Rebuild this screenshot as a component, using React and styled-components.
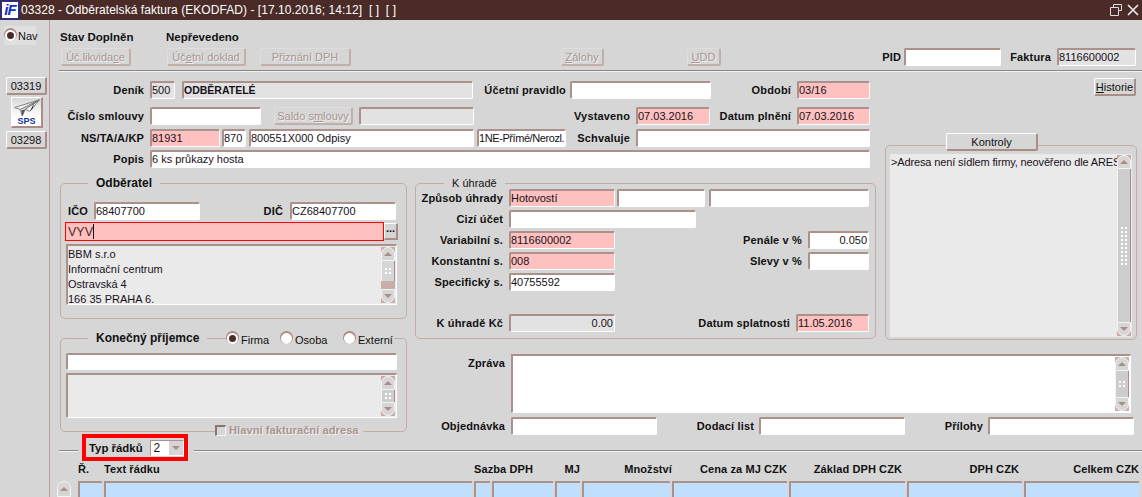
import React from 'react'
import styled, { createGlobalStyle } from 'styled-components'

const GlobalStyle = createGlobalStyle`
html, body { margin: 0; padding: 0; background: #d6d6d6; }
body { font-family: "Liberation Sans", Arial, sans-serif; font-size: 11px; color: #111; }
* { box-sizing: border-box; }
`
const Page = styled.div`
width: 1142px;
height: 497px;
overflow: hidden;
display: flex;
flex-direction: column;
background: #d6d6d6;
`
const TitleBar = styled.div`
height: 20px;
flex: none;
display: flex;
align-items: center;
background: #4a2b28;
color: #fff;
font-size: 12px;
letter-spacing: 0.05px;
padding: 0 3px 0 1px;
`
const TitleText = styled.span`
margin-left: 2px;
flex: 1;
white-space: pre;
`
const Logo = styled.span`
width: 18px;
height: 18px;
background: #fff;
border: 1px solid #1530c8;
color: #1530c8;
font: italic bold 15px/16px "Liberation Sans", sans-serif;
text-align: center;
letter-spacing: -1px;
`
const WinIcon = styled.svg`
width: 12px;
height: 12px;
margin-left: ${p => p.$ml || 0}px;
`
const Body = styled.div`
flex: 1;
display: flex;
min-height: 0;
`
const Sidebar = styled.div`
width: 50px;
flex: none;
display: flex;
flex-direction: column;
align-items: flex-start;
padding: 6px 0 0 4px;
border-right: 1px solid #b9a19b;
`
const NavItem = styled.div`
width: 32px;
height: 19px;
display: flex;
align-items: center;
gap: 2px;
padding-left: 1px;
background: #e0e0e0;
font-size: 11px;
`
const Main = styled.div`
flex: 1;
min-width: 0;
display: flex;
flex-direction: column;
`
const Header = styled.div`
height: 50px;
flex: none;
padding: 9px 0 0 10px;
`
const StatusRow = styled.div`
display: flex;
height: 15px;
align-items: center;
font-weight: bold;
font-size: 11.5px;
`
const StatusText = styled.span`
width: 106px;
white-space: pre;
`
const ButtonRow = styled.div`
display: flex;
align-items: center;
height: 18px;
margin: 4px 0 0 1px;
`
const Rule = styled.div`
height: 2px;
flex: none;
margin-left: 9px;
border-top: 1px solid #8b8686;
border-bottom: 1px solid #f2f2f2;
`
const Btn = styled.button`
width: ${p => p.$w}px;
height: ${p => p.$h || 18}px;
margin-left: ${p => p.$ml || 0}px;
flex: none;
padding: 0;
font: 11px "Liberation Sans", sans-serif;
white-space: nowrap;
background: #d6d6d6;
color: ${p => (p.$off ? '#a8958f' : '#111')};
text-shadow: ${p => (p.$off ? '1px 1px 0 #efefef' : 'none')};
border-style: solid;
border-width: 1px 2px 2px 1px;
border-color: ${p => (p.$off ? '#e4dcda #c4aea8 #c4aea8 #e4dcda' : '#fff #a98d86 #a98d86 #fff')};
border-radius: 2px;
`
const Field = styled.div`
width: ${p => p.$w}px;
height: ${p => p.$h || 18}px;
margin-left: ${p => p.$ml || 0}px;
flex: none;
display: flex;
align-items: center;
justify-content: ${p => (p.$right ? 'flex-end' : 'flex-start')};
padding: 0 1px 1px 0;
font-size: ${p => (p.$bold ? 10.5 : 11)}px;
letter-spacing: ${p => (p.$tight ? -0.42 : 0)}px;
white-space: nowrap;
overflow: hidden;
color: #181018;
background: ${p => ({ pink: '#ffc0c0', grey: '#e2e2e2', white: '#fff' }[p.$tone || 'white'])};
font-weight: ${p => (p.$bold ? 'bold' : 'normal')};
border-style: solid;
border-width: 2px 1px 1px 2px;
border-color: #ab918b #fff #fff #ab918b;
border-radius: 2px;
`
const Label = styled.div`
width: ${p => p.$w}px;
flex: none;
padding-top: ${p => p.$pt || 0}px;
margin-left: ${p => p.$ml || 0}px;
text-align: right;
font-weight: bold;
font-size: 11px;
letter-spacing: 0.15px;
white-space: nowrap;
`
const FormGrid = styled.div`
display: grid;
grid-template-columns: 358px 477px 257px;
grid-template-rows: 104px 170px 89px;
grid-template-areas:
  "top top side"
  "buyer pay side"
  "buyer msg msg";
flex: none;
`
const TopArea = styled.div`
grid-area: top;
`
const Row = styled.div`
display: flex;
align-items: ${p => (p.$top ? 'flex-start' : 'center')};
margin-top: ${p => p.$mt || 0}px;
`
const SideArea = styled.div`
grid-area: side;
display: flex;
flex-direction: column;
align-items: flex-start;
`
const BuyerArea = styled.div`
grid-area: buyer;
padding: 7px 0 0 10px;
`
const PayArea = styled.div`
grid-area: pay;
padding: 7px 0 0 7px;
`
const MsgArea = styled.div`
grid-area: msg;
padding-top: 8px;
`
const HistorieBtn = styled(Btn)`
margin-top: 6px;
`
const SideBtn = styled(Btn)`
margin-top: ${p => p.$mt || 0}px;
`
const Group = styled.div`
position: relative;
width: ${p => p.$w}px;
height: ${p => p.$h}px;
margin: ${p => p.$m || 0};
padding: ${p => p.$pad || 0};
border: 1px solid #c4aca6;
border-radius: 5px;
`
const Legend = styled.div`
position: absolute;
top: -8px;
left: ${p => p.$x}px;
padding: 0 8px;
background: #d6d6d6;
font-weight: ${p => (p.$thin ? 'normal' : 'bold')};
font-size: ${p => (p.$thin ? 11 : 12)}px;
line-height: 15px;
`
const KontrolyBtn = styled(Btn)`
position: absolute;
top: -13px;
left: 60px;
`
const TextBox = styled.div`
width: ${p => p.$w}px;
height: ${p => p.$h}px;
margin: ${p => p.$m || 0};
flex: none;
display: flex;
justify-content: space-between;
padding: 1px 1px 1px 0;
background: ${p => p.$bg || '#eaeaea'};
border-style: solid;
border-width: ${p => (p.$flat ? '0' : '2px 1px 1px 2px')};
border-color: #ab918b #fff #fff #ab918b;
font-size: 11px;
line-height: 15px;
`
const Lines = styled.div`
white-space: pre;
flex: 1;
min-width: 0;
overflow: ${p => (p.$clip ? 'hidden' : 'visible')};
padding-left: ${p => (p.$clip ? 1 : 0)}px;
letter-spacing: ${p => (p.$clip ? -0.14 : 0)}px;
color: #181018;
`
const ScrollTrack = styled.div`
width: 14px;
flex: none;
display: flex;
flex-direction: column;
background: #c8aea8;
`
const ScrollEnd = styled.div`
height: 14px;
flex: none;
display: flex;
align-items: center;
justify-content: center;
background: #d6d6d6;
border: 1px solid #f4f4f4;
border-radius: ${p => (p.$down ? '0 0 7px 7px' : '7px 7px 0 0')};
&::after {
  content: '';
  border-left: 4px solid transparent;
  border-right: 4px solid transparent;
  border-${p => (p.$down ? 'top' : 'bottom')}: 4px solid #a98d86;
}
`
const ScrollThumb = styled.div`
flex: ${p => (p.$fill ? 1 : 'none')};
height: ${p => (p.$fill ? 'auto' : '20px')};
display: flex;
align-items: center;
justify-content: center;
background: ${p => (p.$fill ? '#cdcdcd' : '#d6d6d6')};
border-left: 1px solid #f4f4f4;
border-right: 1px solid #a98d86;
`
const ScrollRest = styled.div`
flex: 1;
`
const Grip = styled.div`
width: 8px;
height: ${p => p.$h}px;
background-image: radial-gradient(circle, #fff 0.8px, transparent 1px);
background-size: 4px 4px;
`
const ErrorField = styled.div`
width: 319px;
height: 19px;
flex: none;
display: flex;
align-items: center;
padding-left: 2px;
background: #ffc0c0;
border: 1px solid #f00;
font-size: 12.5px;
color: #4a2b28;
`
const Caret = styled.span`
width: 1px;
height: 15px;
background: #111;
`
const DotsBtn = styled.div`
width: 14px;
height: 17px;
flex: none;
text-align: center;
font-weight: bold;
font-size: 11px;
line-height: 9px;
background: #d6d6d6;
border-style: solid;
border-width: 1px 2px 2px 1px;
border-color: #fff #a98d86 #a98d86 #fff;
`
const RadioDot = styled.span`
width: 11px;
height: 11px;
flex: none;
border-radius: 50%;
background: ${p => (p.$on ? '#4a2b28' : '#fff')};
border: ${p => (p.$on ? '2px solid #fff' : '1px solid #fff')};
box-shadow: 0 -1px 0 1px #a98d86;
`
const RadioGroup = styled.div`
position: absolute;
top: -7px;
left: 165px;
display: flex;
padding-left: 1px;
background: #d6d6d6;
`
const RadioItem = styled.label`
display: flex;
align-items: flex-start;
gap: 3px;
width: ${p => p.$w}px;
font-size: 11px;
line-height: 16px;
span { margin-top: 1px; }
`
const AddressCheck = styled.div`
position: absolute;
left: 154px;
top: 85px;
display: flex;
align-items: center;
gap: 3px;
background: #d6d6d6;
padding-right: 4px;
color: #a8958f;
font-weight: bold;
font-size: 11px;
letter-spacing: 0.1px;
text-shadow: 1px 1px 0 #efefef;
`
const CheckBox = styled.span`
width: 11px;
height: 11px;
border-style: solid;
border-width: 2px 1px 1px 2px;
border-color: #8c7570 #f4f4f4 #f4f4f4 #8c7570;
`
const Divider = styled.div`
height: 27px;
flex: none;
margin-top: -1px;
display: flex;
align-items: flex-start;
padding-left: 9px;
`
const DividerLine = styled(Rule)`
margin: 16px 0 0 ${p => p.$ml || 0}px;
width: ${p => (p.$w ? `${p.$w}px` : 'auto')};
flex: ${p => (p.$w ? 'none' : 1)};
`
const TypeBox = styled.div`
width: 106px;
height: 27px;
margin-left: 4px;
flex: none;
display: flex;
align-items: center;
padding-left: 3px;
border: 4px solid #f00;
font-weight: bold;
font-size: 11.4px;
white-space: nowrap;
`
const SelectBox = styled.div`
width: 34px;
height: 16px;
margin-left: 7px;
display: flex;
background: #fff;
font-weight: normal;
font-size: 12px;
line-height: 15px;
padding-left: 3px;
justify-content: space-between;
border-style: solid;
border-width: 1px;
border-color: #ab918b #fff #fff #ab918b;
`
const SelectArrow = styled.span`
width: 14px;
background: #d6d6d6;
display: flex;
align-items: center;
justify-content: center;
&::after {
  content: '';
  border-left: 4px solid transparent;
  border-right: 4px solid transparent;
  border-top: 4px solid #a98d86;
}
`
const LineGrid = styled.div`
display: grid;
grid-template-columns: 19px 24px 368px 16px 61px 25px 88px 115px 116px 115px 115px;
column-gap: 2px;
padding-left: 7px;
margin-top: ${p => p.$mt || 0}px;
`
const ColHead = styled.div`
grid-column: ${p => p.$span || 'auto'};
text-align: ${p => (p.$right ? 'right' : 'left')};
margin-right: ${p => p.$mr || 0}px;
font-weight: bold;
font-size: 11px;
letter-spacing: 0.1px;
line-height: 14px;
white-space: nowrap;
`
const LineCell = styled.div`
height: 20px;
background: #bfdffc;
border-style: solid;
border-width: 2px 0 0 2px;
border-color: #ab918b;
`
const UpBtn = styled(ScrollEnd)`
width: 14px;
height: 16px;
`
const IconBtn = styled.button`
width: 32px;
height: 31px;
margin: 2px 0 3px 7px;
padding: 0;
display: flex;
flex-direction: column;
align-items: center;
background: linear-gradient(#d8d8d8, #fff 70%);
border-style: solid;
border-width: 1px 2px 2px 1px;
border-color: #fff #a98d86 #a98d86 #fff;
color: #1530a8;
font: bold 9px/9px "Liberation Sans", sans-serif;
`

function Scrollbar({ rest, grip }) {
  return (
    <ScrollTrack>
      <ScrollEnd />
      <ScrollThumb $fill={!rest}>
        <Grip $h={grip} />
      </ScrollThumb>
      {rest ? <ScrollRest /> : null}
      <ScrollEnd $down />
    </ScrollTrack>
  )
}

function Radio({ on, w, children }) {
  return (
    <RadioItem $w={w}>
      <RadioDot $on={on} />
      {children}
    </RadioItem>
  )
}

export default function App() {
  return (
    <Page>
      <GlobalStyle />
      <TitleBar>
        <Logo>iF</Logo>
        <TitleText>03328 - Odběratelská faktura (EKODFAD) - [17.10.2016; 14:12]  [ ]  [ ]</TitleText>
        <WinIcon viewBox="0 0 12 12" fill="none" stroke="#ddd">
          <path d="M3.5 3V.5h8v6H9M.5 3.5h8v8h-8z" />
        </WinIcon>
        <WinIcon viewBox="0 0 12 12" $ml={5} fill="none" stroke="#eee" strokeWidth="1.6">
          <path d="M1 1l10 10M11 1L1 11" />
        </WinIcon>
      </TitleBar>
      <Body>
        <Sidebar>
          <NavItem>
            <RadioDot $on />
            Nav
          </NavItem>
          <SideBtn $w={41} $ml={2} $mt={32}>03319</SideBtn>
          <IconBtn>
            <svg width="28" height="20" viewBox="0 0 28 20">
              <path d="M1 10L27 2 17 14 12 12 9 19 7 12z" fill="#fbfbfb" stroke="#777" strokeWidth="1" />
              <path d="M7 12L27 2 12 12" fill="#ddd" stroke="#666" strokeWidth="1" />
              <path d="M8 13l1 6 3-7z" fill="#555" />
              <path d="M22 4l-5 10 3-3z" fill="#333" />
            </svg>
            SPS
          </IconBtn>
          <Btn $w={41} $ml={2}>03298</Btn>
        </Sidebar>
        <Main>
          <Header>
            <StatusRow>
              <StatusText>Stav Doplněn</StatusText>
              <span>Nepřevedeno</span>
            </StatusRow>
            <ButtonRow>
              <Btn $w={70} $off>Úč.likvida<u>c</u>e</Btn>
              <Btn $w={79} $ml={36} $off>Úč<u>e</u>tní doklad</Btn>
              <Btn $w={91} $ml={14} $off>Přiznání DPH</Btn>
              <Btn $w={43} $ml={210} $off><u>Z</u>álohy</Btn>
              <Btn $w={34} $ml={83} $off><u>U</u>DD</Btn>
              <Label $w={20} $ml={160}>PID</Label>
              <Field $w={97} $ml={3} />
              <Label $w={50}>Faktura</Label>
              <Field $w={79} $ml={6} $tone="grey">8116600002</Field>
            </ButtonRow>
          </Header>
          <Rule />
          <FormGrid>
            <TopArea>
              <Row $mt={9}>
                <Label $w={94}>Deník</Label>
                <Field $w={25} $ml={6} $tone="grey">500</Field>
                <Field $w={291} $ml={7} $tone="grey" $bold>ODBĚRATELÉ</Field>
                <Label $w={93}>Účetní pravidlo</Label>
                <Field $w={141} $ml={4} />
                <Label $w={80}>Období</Label>
                <Field $w={73} $ml={6} $tone="pink">03/16</Field>
              </Row>
              <Row $mt={8}>
                <Label $w={94}>Číslo smlouvy</Label>
                <Field $w={111} $ml={6} />
                <Btn $w={79} $ml={13} $off>Saldo s<u>m</u>louvy</Btn>
                <Field $w={115} $ml={6} $tone="grey" />
                <Label $w={156}>Vystaveno</Label>
                <Field $w={74} $ml={6} $tone="pink">07.03.2016</Field>
                <Label $w={81}>Datum plnění</Label>
                <Field $w={73} $ml={6} $tone="pink">07.03.2016</Field>
              </Row>
              <Row $mt={4}>
                <Label $w={94}>NS/TA/A/KP</Label>
                <Field $w={70} $ml={6} $tone="pink">81931</Field>
                <Field $w={24} $ml={2}>870</Field>
                <Field $w={225} $ml={3}>800551X000 Odpisy</Field>
                <Field $w={89} $ml={3} $tight>1NE-Přímé/Nerozl.</Field>
                <Label $w={64}>Schvaluje</Label>
                <Field $w={234} $ml={6} />
              </Row>
              <Row $mt={3}>
                <Label $w={94}>Popis</Label>
                <Field $w={720} $ml={6}>6 ks průkazy hosta</Field>
              </Row>
            </TopArea>
            <SideArea>
              <HistorieBtn $w={42} $ml={209}><u>H</u>istorie</HistorieBtn>
              <Group $w={252} $h={195} $m="49px 0 0 0" $pad="8px 4px 3px 4px">
                <KontrolyBtn $w={92}>Kontroly</KontrolyBtn>
                <TextBox $w={242} $h={183} $flat>
                  <Lines $clip>&gt;Adresa není sídlem firmy, neověřeno dle ARES</Lines>
                  <Scrollbar grip={40} />
                </TextBox>
              </Group>
            </SideArea>
            <BuyerArea>
              <Group $w={347} $h={136} $pad="18px 0 0 4px">
                <Legend $x={27}>Odběratel</Legend>
                <Row>
                  <Label $w={23}>IČO</Label>
                  <Field $w={106} $ml={6}>68407700</Field>
                  <Label $w={83}>DIČ</Label>
                  <Field $w={106} $ml={7}>CZ68407700</Field>
                </Row>
                <Row $mt={2}>
                  <ErrorField>VYV<Caret /></ErrorField>
                  <DotsBtn>...</DotsBtn>
                </Row>
                <Row $mt={3}>
                  <TextBox $w={331} $h={61} $m="0 0 0 1px">
                    <Lines>{'BBM s.r.o\nInformační centrum\nOstravská 4\n166 35 PRAHA 6.'}</Lines>
                    <Scrollbar rest grip={8} />
                  </TextBox>
                </Row>
              </Group>
              <Group $w={347} $h={94} $m="19px 0 0 0" $pad="14px 0 0 5px">
                <Legend $x={27}>Konečný příjemce</Legend>
                <RadioGroup>
                  <Radio on w={54}>Firma</Radio>
                  <Radio w={63}>Osoba</Radio>
                  <Radio w={50}>Externí</Radio>
                </RadioGroup>
                <Field $w={331} $h={17} />
                <TextBox $w={331} $h={45} $m="3px 0 0 0">
                  <Lines />
                  <Scrollbar grip={8} />
                </TextBox>
                <AddressCheck>
                  <CheckBox />
                  Hlavní fakturační adresa
                </AddressCheck>
              </Group>
            </BuyerArea>
            <PayArea>
              <Group $w={461} $h={156} $pad="5px 0 0 0">
                <Legend $x={28} $thin>K úhradě</Legend>
                <Row>
                  <Label $w={87}>Způsob úhrady</Label>
                  <Field $w={106} $ml={6} $tone="pink">Hotovostí</Field>
                  <Field $w={88} $ml={2} />
                  <Field $w={160} $ml={4} />
                </Row>
                <Row $mt={3}>
                  <Label $w={87}>Cizí účet</Label>
                  <Field $w={187} $ml={6} />
                </Row>
                <Row $mt={3}>
                  <Label $w={87}>Variabilní s.</Label>
                  <Field $w={106} $ml={6} $tone="pink">8116600002</Field>
                  <Label $w={187}>Penále v %</Label>
                  <Field $w={61} $ml={6} $right>0.050</Field>
                </Row>
                <Row $mt={3}>
                  <Label $w={87}>Konstantní s.</Label>
                  <Field $w={106} $ml={6} $tone="pink">008</Field>
                  <Label $w={187}>Slevy v %</Label>
                  <Field $w={61} $ml={6} />
                </Row>
                <Row $mt={3}>
                  <Label $w={87}>Specifický s.</Label>
                  <Field $w={106} $ml={6}>40755592</Field>
                </Row>
                <Row $mt={23}>
                  <Label $w={87}>K úhradě Kč</Label>
                  <Field $w={106} $ml={6} $tone="grey" $right>0.00</Field>
                  <Label $w={175}>Datum splatnosti</Label>
                  <Field $w={73} $ml={6} $tone="pink">11.05.2016</Field>
                </Row>
              </Group>
            </PayArea>
            <MsgArea>
              <Row $top>
                <Label $w={97} $pt={3}>Zpráva</Label>
                <TextBox $w={620} $h={59} $m="0 0 0 6px" $bg="#fff">
                  <Lines />
                  <Scrollbar grip={8} />
                </TextBox>
              </Row>
              <Row $mt={4}>
                <Label $w={97}>Objednávka</Label>
                <Field $w={146} $ml={6} />
                <Label $w={97}>Dodací list</Label>
                <Field $w={146} $ml={5} />
                <Label $w={78}>Přílohy</Label>
                <Field $w={146} $ml={5} />
              </Row>
            </MsgArea>
          </FormGrid>
          <Divider>
            <DividerLine $w={19} />
            <TypeBox>
              Typ řádků
              <SelectBox>2<SelectArrow /></SelectBox>
            </TypeBox>
            <DividerLine $ml={6} />
          </Divider>
          <LineGrid $mt={1}>
            <span />
            <ColHead>Ř.</ColHead>
            <ColHead>Text řádku</ColHead>
            <ColHead $span="span 2">Sazba DPH</ColHead>
            <ColHead $right>MJ</ColHead>
            <ColHead $right $mr={-2}>Množství</ColHead>
            <ColHead $right>Cena za MJ CZK</ColHead>
            <ColHead $right $mr={3}>Základ DPH CZK</ColHead>
            <ColHead $right $mr={3}>DPH CZK</ColHead>
            <ColHead $right>Celkem CZK</ColHead>
          </LineGrid>
          <LineGrid $mt={5}>
            <UpBtn />
            <LineCell />
            <LineCell />
            <LineCell />
            <LineCell />
            <LineCell />
            <LineCell />
            <LineCell />
            <LineCell />
            <LineCell />
            <LineCell />
          </LineGrid>
        </Main>
      </Body>
    </Page>
  )
}
